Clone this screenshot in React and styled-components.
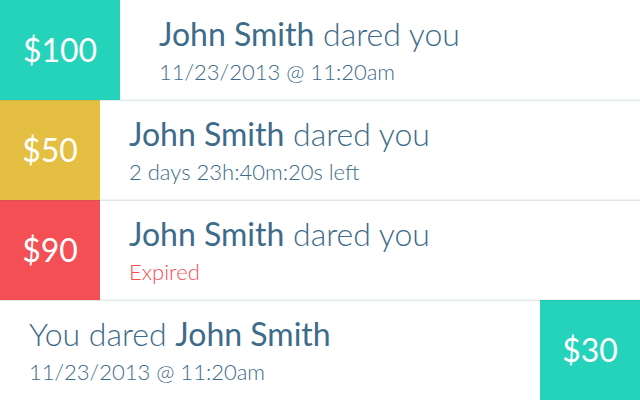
import React from "react";
import styled, { createGlobalStyle } from "styled-components";

const GlobalStyle = createGlobalStyle`
  * { box-sizing: border-box; }
  body { margin: 0; background: #fff; font-family: Lato, sans-serif; }
`;

const tones = { teal: "#25d2ba", gold: "#e4bf41", red: "#f34f55" };

const DareList = styled.ul`
  margin: 0;
  padding: 0;
  list-style: none;
`;

const Dare = styled.li`
  display: flex;
  flex-direction: ${(p) => (p.$sent ? "row-reverse" : "row")};
  min-height: 100px;
`;

const Amount = styled.div`
  display: flex;
  align-items: center;
  justify-content: center;
  flex: none;
  min-width: ${(p) => (p.$wide ? "120px" : "100px")};
  color: #fff;
  background: ${(p) => tones[p.$tone]};
  font-size: 32px;
  line-height: 40px;

  li + li > & {
    box-shadow: inset 0 1px 0 rgba(40, 90, 90, 0.12);
  }
`;

const Details = styled.div`
  flex: 1;
  padding: 13px 28px 0 ${(p) => (p.$wide ? "39px" : "29px")};
  border-top: 1px solid #dfe8e9;
  border-bottom: 1px solid #f1f5f5;
  color: #3d6b8a;

  li:first-child > & {
    border-top-color: transparent;
  }

  li:last-child > & {
    border-bottom-color: transparent;
  }
`;

const Title = styled.h2`
  margin: 0;
  font-size: 32px;
  font-weight: 300;
  line-height: 40px;
`;

const Name = styled.strong`
  font-weight: 400;
`;

const Status = styled.p`
  margin: 0;
  padding-top: 4px;
  color: ${(p) => (p.$expired ? tones.red : "inherit")};
  font-size: 22px;
  font-weight: 300;
  line-height: 28px;
`;

const dares = [
  { amount: "$100", tone: "teal", wide: true, status: "11/23/2013 @ 11:20am" },
  { amount: "$50", tone: "gold", status: "2 days 23h:40m:20s left" },
  { amount: "$90", tone: "red", status: "Expired", expired: true },
  { amount: "$30", tone: "teal", status: "11/23/2013 @ 11:20am", sent: true },
];

export default function App() {
  return (
    <>
      <GlobalStyle />
      <DareList>
        {dares.map((d) => (
          <Dare key={d.amount} $sent={d.sent}>
            <Amount $tone={d.tone} $wide={d.wide}>{d.amount}</Amount>
            <Details $wide={d.wide}>
              <Title>
                {d.sent ? <>You dared <Name>John Smith</Name></> : <><Name>John Smith</Name> dared you</>}
              </Title>
              <Status $expired={d.expired}>{d.status}</Status>
            </Details>
          </Dare>
        ))}
      </DareList>
    </>
  );
}
